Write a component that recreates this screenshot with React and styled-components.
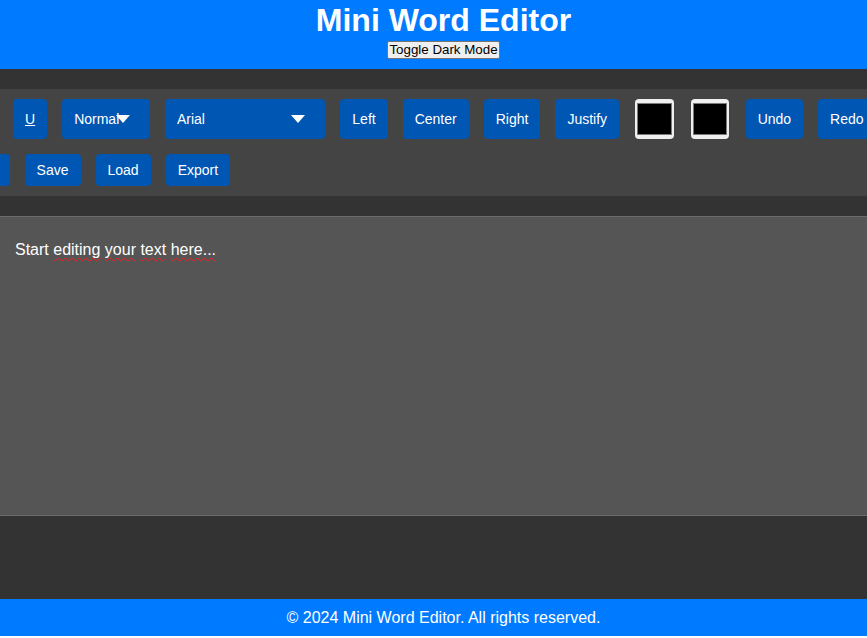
import React from "react";
import styled, { createGlobalStyle } from "styled-components";

const GlobalStyle = createGlobalStyle`
  html, body {
    margin: 0;
    padding: 0;
    overflow-x: hidden;
    background: #ffffff;
  }
  body {
    font-family: "Liberation Sans", Arial, sans-serif;
  }
  * { box-sizing: border-box; }
`;

const Page = styled.div`
  display: flex;
  flex-direction: column;
  min-height: calc(100vh - 2px);
  background: #333333;
  color: #ffffff;
`;

const Header = styled.header`
  box-sizing: content-box;
  width: 100%;
  padding: 2px 10px 10px;
  background: #007bff;
  text-align: center;
`;

const Title = styled.h1`
  margin: 0;
  font-size: 32px;
  line-height: 37px;
  font-weight: bold;
  color: #ffffff;
`;

const ModeButton = styled.button`
  display: inline-block;
  margin-top: 2px;
  padding: 0 1px;
  height: 18px;
  font-family: "Liberation Sans", Arial, sans-serif;
  font-size: 13.33px;
  line-height: 16px;
  color: #000000;
  background: #efefef;
  border: 1px solid #767676;
  border-radius: 2px;
`;

const Main = styled.main`
  flex: 1;
  display: flex;
  flex-direction: column;
  gap: 20px;
  padding: 20px 0;
`;

const Toolbar = styled.div`
  display: flex;
  justify-content: center;
  overflow: hidden;
  padding: 10.3px 0;
  background: #444444;
`;

const ToolGroup = styled.div`
  flex: 0 0 1025px;
  display: flex;
  flex-wrap: wrap;
  gap: 15.3px 15px;
`;

const ToolButton = styled.button`
  padding: 8px 12px;
  border: none;
  border-radius: 4px;
  background: #0056b3;
  color: #ffffff;
  font-family: "Liberation Sans", Arial, sans-serif;
  font-size: 14px;
  font-weight: ${(p) => (p.$bold ? "bold" : "normal")};
  font-style: ${(p) => (p.$italic ? "italic" : "normal")};
  text-decoration: ${(p) => (p.$underline ? "underline" : "none")};
  cursor: pointer;
`;

const SelectWrap = styled.div`
  position: relative;
  display: flex;
  width: ${(p) => p.$width}px;

  &::after {
    content: "";
    position: absolute;
    right: 20px;
    top: 50%;
    margin-top: -3.5px;
    width: 0;
    height: 0;
    border-left: 7.5px solid transparent;
    border-right: 7.5px solid transparent;
    border-top: 8px solid #ffffff;
    pointer-events: none;
  }
`;

const Select = styled.select`
  appearance: none;
  -webkit-appearance: none;
  width: 100%;
  padding: 8px 12px;
  border: none;
  border-radius: 4px;
  background: #0056b3;
  color: #ffffff;
  font-family: "Liberation Sans", Arial, sans-serif;
  font-size: 14px;
  outline: none;
`;

const ColorInput = styled.input`
  -webkit-appearance: none;
  appearance: none;
  width: 38.4px;
  height: 39.4px;
  margin: 0 1.2px;
  padding: 0;
  border: none;
  border-radius: 4px;
  background: #efefef;
  cursor: pointer;

  &::-webkit-color-swatch-wrapper {
    padding: 4px 2px;
  }
  &::-webkit-color-swatch {
    border: 1.5px solid #7a7a7a;
    border-radius: 0;
  }
`;

const Editor = styled.div`
  height: 300px;
  padding: 24px 15px 15px;
  background: #555555;
  border-top: 1px solid #6a6a6a;
  border-bottom: 1px solid #6a6a6a;
  color: #ffffff;
  font-size: 16px;
  outline: none;
`;

const Misspelled = styled.span`
  text-decoration: underline wavy #ff1a1a;
  text-decoration-thickness: 1.3px;
  text-underline-offset: 2px;
  text-decoration-skip-ink: none;
`;

const Footer = styled.footer`
  box-sizing: content-box;
  width: 100%;
  padding: 9px 10px;
  background: #007bff;
  color: #ffffff;
  font-size: 16px;
  line-height: 19px;
  text-align: center;
`;

export default function App() {
  return (
    <>
      <GlobalStyle />
      <Page>
        <Header>
          <Title>Mini Word Editor</Title>
          <ModeButton>Toggle Dark Mode</ModeButton>
        </Header>
        <Main>
          <Toolbar>
            <ToolGroup>
              <ToolButton $bold>B</ToolButton>
              <ToolButton $italic>I</ToolButton>
              <ToolButton $underline>U</ToolButton>
              <SelectWrap $width={87.8}>
                <Select defaultValue="p">
                  <option value="p">Normal</option>
                  <option value="h1">Heading 1</option>
                  <option value="h2">Heading 2</option>
                  <option value="h3">Heading 3</option>
                </Select>
              </SelectWrap>
              <SelectWrap $width={160.4}>
                <Select defaultValue="Arial">
                  <option value="Arial">Arial</option>
                  <option value="Times New Roman">Times New Roman</option>
                  <option value="Courier New">Courier New</option>
                  <option value="Georgia">Georgia</option>
                  <option value="Verdana">Verdana</option>
                </Select>
              </SelectWrap>
              <ToolButton>Left</ToolButton>
              <ToolButton>Center</ToolButton>
              <ToolButton>Right</ToolButton>
              <ToolButton>Justify</ToolButton>
              <ColorInput type="color" defaultValue="#000000" />
              <ColorInput type="color" defaultValue="#000000" />
              <ToolButton>Undo</ToolButton>
              <ToolButton>Redo</ToolButton>
              <ToolButton>Insert Link</ToolButton>
              <ToolButton>Save</ToolButton>
              <ToolButton>Load</ToolButton>
              <ToolButton>Export</ToolButton>
            </ToolGroup>
          </Toolbar>
          <Editor contentEditable suppressContentEditableWarning spellCheck={false}>
            Start <Misspelled>editing</Misspelled> <Misspelled>your</Misspelled>{" "}
            <Misspelled>text</Misspelled> <Misspelled>here...</Misspelled>
          </Editor>
        </Main>
        <Footer>© 2024 Mini Word Editor. All rights reserved.</Footer>
      </Page>
    </>
  );
}
